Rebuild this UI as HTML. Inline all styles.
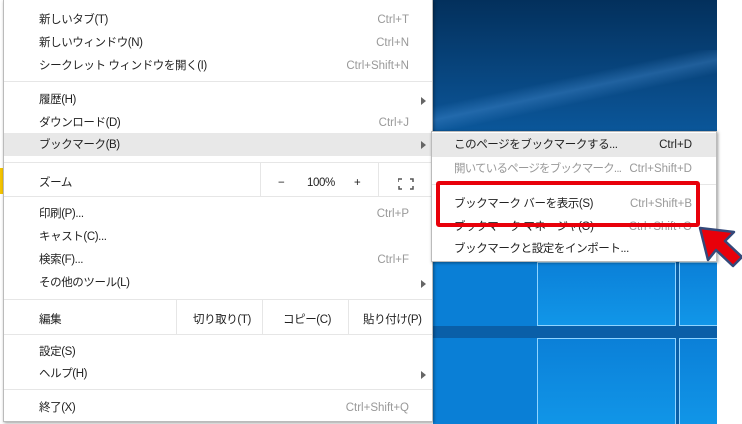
<!DOCTYPE html>
<html><head><meta charset="utf-8"><style>
*{margin:0;padding:0;box-sizing:border-box}
body{width:742px;height:424px;overflow:hidden;background:#fff;position:relative;font-family:"Liberation Sans","Noto Sans CJK JP",sans-serif;font-size:11.5px;color:#222;letter-spacing:-0.4px}
.wall{position:absolute;left:433px;top:0;width:284px;height:424px;background:linear-gradient(180deg,#03305c 0%,#0a4f8e 25%,#0c74c8 55%,#0a8ae0 100%);overflow:hidden}
.menu{position:absolute;left:3px;top:0;width:430px;height:422px;background:#fff;border:1px solid #bbb;border-top:none;box-shadow:1px 1px 3px rgba(0,0,0,.4)}
.r{position:absolute;left:0;width:428px;height:23px;line-height:23px;margin-top:1px}
.r .t{position:absolute;left:35px}
.r .s{position:absolute;right:23px;color:#999;letter-spacing:0}
.r .a{position:absolute;right:6px;top:8px;width:0;height:0;border-left:5px solid #666;border-top:4px solid transparent;border-bottom:4px solid transparent}
.sep{position:absolute;left:0;width:428px;height:1px;background:#e6e6e6}
.vd{position:absolute;width:1px;background:#e6e6e6}
.sub{position:absolute;left:431px;top:131px;width:286px;height:131px;background:#fff;border:1px solid #bbb;box-shadow:1px 1px 3px rgba(0,0,0,.4)}
.sub .r{width:284px}
.sub .r .t{left:22px}
.sub .r .s{right:24px}
.p{position:absolute;border:1px solid #8fd4ff;background:linear-gradient(180deg,#0b80d8,#1196e8)}
</style></head><body>
<div class="wall">
<div style="position:absolute;left:0;top:50px;width:284px;height:80px;background:linear-gradient(168deg,transparent 40%,rgba(90,160,230,.3) 50%,transparent 60%)"></div>
<div style="position:absolute;left:0;top:262px;width:284px;height:162px;background:#0a7fd6"></div>
<div style="position:absolute;left:0;top:326px;width:284px;height:12px;background:#0a5fa8"></div>
<div style="position:absolute;left:243px;top:262px;width:3px;height:162px;background:#0a5fa8"></div>
<div class="p" style="left:104px;top:262px;width:139px;height:64px"></div>
<div class="p" style="left:246px;top:262px;width:40px;height:64px"></div>
<div class="p" style="left:104px;top:338px;width:139px;height:90px"></div>
<div class="p" style="left:246px;top:338px;width:40px;height:90px"></div>
</div>
<div style="position:absolute;left:0;top:168px;width:3px;height:26px;background:#f5c400"></div>
<div class="menu">
<div class="r" style="top:8px"><span class="t">新しいタブ(T)</span><span class="s">Ctrl+T</span></div>
<div class="r" style="top:31px"><span class="t">新しいウィンドウ(N)</span><span class="s">Ctrl+N</span></div>
<div class="r" style="top:54px"><span class="t">シークレット ウィンドウを開く(I)</span><span class="s">Ctrl+Shift+N</span></div>
<div class="sep" style="top:81px"></div>
<div class="r" style="top:88px"><span class="t">履歴(H)</span><span class="a"></span></div>
<div class="r" style="top:111px"><span class="t">ダウンロード(D)</span><span class="s">Ctrl+J</span></div>
<div class="r" style="top:133px;margin-top:0;background:#e8e8e8;line-height:25px"><span class="t">ブックマーク(B)</span><span class="a"></span></div>
<div class="sep" style="top:162px"></div>
<div class="r" style="top:169px;height:27px;line-height:27px"><span class="t">ズーム</span>
<span style="position:absolute;left:274px">−</span><span style="position:absolute;left:303px">100%</span><span style="position:absolute;left:350px">+</span>
<svg style="position:absolute;left:394px;top:8px" width="16" height="12" viewBox="0 0 16 12" fill="none" stroke="#555" stroke-width="1.5"><path d="M0 4V1h4M12 1h3v3M15 8v3h-3M4 11H1V8"/></svg></div>
<div class="vd" style="left:256px;top:163px;height:33px"></div>
<div class="vd" style="left:374px;top:163px;height:33px"></div>
<div class="sep" style="top:196px"></div>
<div class="r" style="top:202px"><span class="t">印刷(P)...</span><span class="s">Ctrl+P</span></div>
<div class="r" style="top:225px"><span class="t">キャスト(C)...</span></div>
<div class="r" style="top:248px"><span class="t">検索(F)...</span><span class="s">Ctrl+F</span></div>
<div class="r" style="top:271px"><span class="t">その他のツール(L)</span><span class="a"></span></div>
<div class="sep" style="top:299px"></div>
<div class="r" style="top:305px;height:29px;line-height:29px"><span class="t">編集</span>
<span style="position:absolute;left:189px">切り取り(T)</span><span style="position:absolute;left:279px">コピー(C)</span><span style="position:absolute;left:359px">貼り付け(P)</span></div>
<div class="vd" style="left:172px;top:300px;height:34px"></div>
<div class="vd" style="left:258px;top:300px;height:34px"></div>
<div class="vd" style="left:344px;top:300px;height:34px"></div>
<div class="sep" style="top:334px"></div>
<div class="r" style="top:340px"><span class="t">設定(S)</span></div>
<div class="r" style="top:362px"><span class="t">ヘルプ(H)</span><span class="a"></span></div>
<div class="sep" style="top:389px"></div>
<div class="r" style="top:396px"><span class="t">終了(X)</span><span class="s">Ctrl+Shift+Q</span></div>
</div>
<div class="sub">
<div class="r" style="top:1px;margin-top:0;height:24px;line-height:25px;background:#e8e8e8"><span class="t">このページをブックマークする...</span><span class="s" style="color:#222">Ctrl+D</span></div>
<div class="r" style="top:25px"><span class="t" style="color:#999;letter-spacing:-0.8px">開いているページをブックマーク...</span><span class="s" style="right:24px;background:#fff;padding-left:3px">Ctrl+Shift+D</span></div>
<div class="sep" style="top:52px;width:284px"></div>
<div class="r" style="top:60px"><span class="t">ブックマーク バーを表示(S)</span><span class="s">Ctrl+Shift+B</span></div>
<div class="r" style="top:83px"><span class="t">ブックマーク マネージャ(O)</span><span class="s">Ctrl+Shift+O</span></div>
<div class="r" style="top:105px"><span class="t">ブックマークと設定をインポート...</span></div>
</div>
<div style="position:absolute;left:436px;top:181px;width:264px;height:46px;border:4px solid #e8000a;border-radius:3px"></div>
<svg style="position:absolute;left:0;top:0" width="742" height="424"><polygon points="700,228 734,232 725,241 742,257 733,266 716,250 708,260" fill="#e8000a" stroke="#34497a" stroke-width="2.5" stroke-linejoin="round"/></svg>
</body></html>
